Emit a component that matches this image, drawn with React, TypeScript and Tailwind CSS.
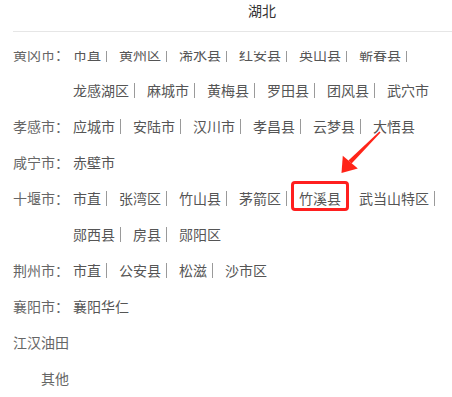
type Region = {
  label: string;
  items: string[];
};

const regions: Region[] = [
  {
    label: "黄冈市：",
    items: ["市直", "黄州区", "浠水县", "红安县", "英山县", "蕲春县", "龙感湖区", "麻城市", "黄梅县", "罗田县", "团风县", "武穴市"],
  },
  { label: "孝感市：", items: ["应城市", "安陆市", "汉川市", "孝昌县", "云梦县", "大悟县"] },
  { label: "咸宁市：", items: ["赤壁市"] },
  {
    label: "十堰市：",
    items: ["市直", "张湾区", "竹山县", "茅箭区", "竹溪县", "武当山特区", "郧西县", "房县", "郧阳区"],
  },
  { label: "荆州市：", items: ["市直", "公安县", "松滋", "沙市区"] },
  { label: "襄阳市：", items: ["襄阳华仁"] },
  { label: "江汉油田", items: [] },
  { label: "其他", items: [] },
];

// highlighted entry gets the red frame
const selected = "竹溪县";

function RegionRow({ region }: { region: Region }) {
  return (
    <div className="flex leading-[36px]">
      <span className="w-[56px] shrink-0 text-right text-[#666]">{region.label}</span>
      <div className="ml-[4px] flex flex-1 flex-wrap">
        {region.items.map((name, i) => (
          <span key={name + i} className="relative inline-flex items-center text-[#555]">
            {name}
            {region.label === "十堰市：" && name === selected ? (
              <span className="absolute -left-[8px] top-[1px] h-[30px] w-[58px] rounded-[4px] border-[3px] border-[#ff1f1f]" />
            ) : null}
            {i < region.items.length - 1 ? (
              <span className="ml-[5px] mr-[12px] h-[15px] w-px bg-[#9a9a9a]" />
            ) : null}
          </span>
        ))}
      </div>
    </div>
  );
}

export default function App() {
  return (
    <div
      className="relative h-[397px] w-[452px] overflow-hidden bg-white text-[14px]"
      style={{ fontFamily: '"Noto Sans CJK SC", "Noto Sans", sans-serif' }}
    >
      <div className="ml-[13px] h-[32px] border-b border-[#e6e6e6] pl-[59px] text-center leading-[20px] text-[#333]">
        湖北
      </div>

      <div className="mt-[19px] h-[346px] overflow-hidden pl-[13px]">
        <div className="-mt-[15px]">
          {regions.map((r) => (
            <RegionRow key={r.label} region={r} />
          ))}
        </div>
      </div>

      {/* pointer arrow */}
      <svg className="absolute left-0 top-0" width="452" height="397" viewBox="0 0 452 397">
        <polygon points="380.6,132.6 379.4,131.4 348.4,160.4 351.6,163.6" fill="#ff2418" />
        <polygon points="341.5,173 342.8,155.8 357.8,168.4" fill="#ff2418" />
      </svg>
    </div>
  );
}
